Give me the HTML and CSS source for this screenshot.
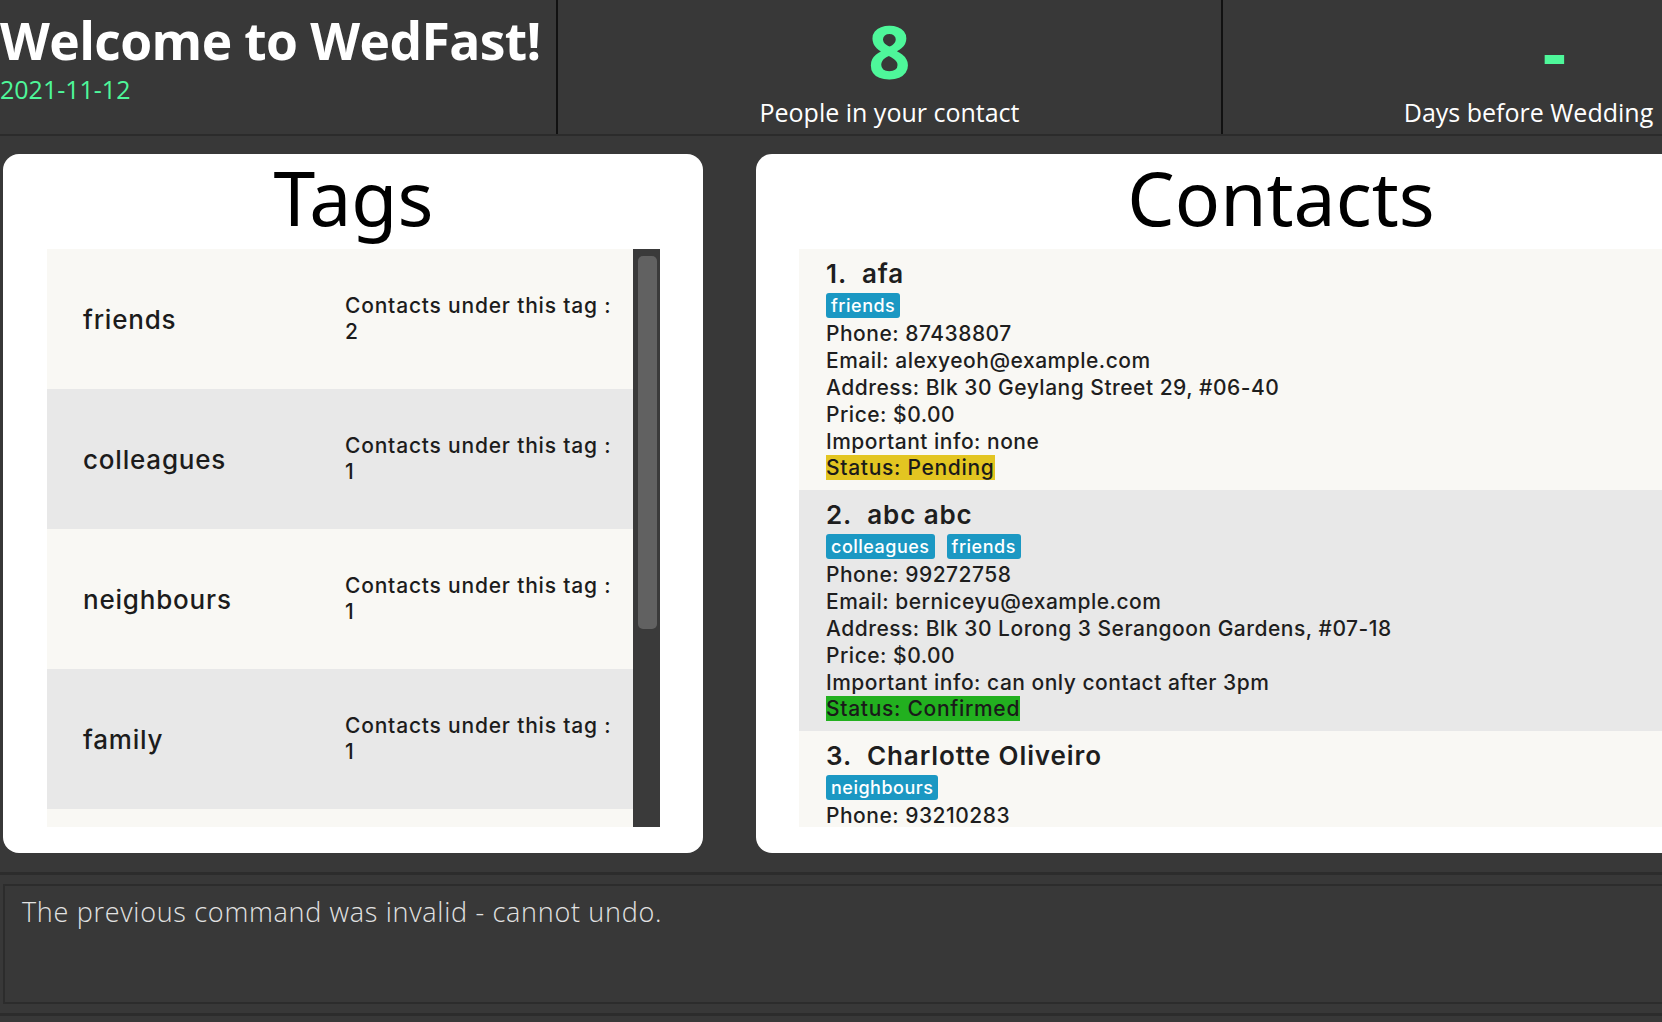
FILE: index.html
```html
<!DOCTYPE html>
<html lang="en">
<head>
<meta charset="utf-8">
<title>WedFast</title>
<link rel="stylesheet" href="styles.css">
</head>
<body>
<div class="app">
  <header class="header">
    <div class="welcome">
      <div class="welcome-title">Welcome to WedFast!</div>
      <div class="welcome-date">2021-11-12</div>
    </div>
    <div class="stat">
      <div class="stat-num">8</div>
      <div class="stat-label">People in your contact</div>
    </div>
    <div class="stat stat-right">
      <div class="stat-num">-</div>
      <div class="stat-label">Days before Wedding</div>
    </div>
  </header>

  <main class="main">
    <section class="panel tags-panel">
      <h2 class="panel-title">Tags</h2>
      <div class="tag-list">
        <div class="tag-rows">
          <div class="tag-row odd"><div class="tag-name">friends</div><div class="tag-count">Contacts under this tag :<br>2</div></div>
          <div class="tag-row even"><div class="tag-name">colleagues</div><div class="tag-count">Contacts under this tag :<br>1</div></div>
          <div class="tag-row odd"><div class="tag-name">neighbours</div><div class="tag-count">Contacts under this tag :<br>1</div></div>
          <div class="tag-row even"><div class="tag-name">family</div><div class="tag-count">Contacts under this tag :<br>1</div></div>
          <div class="tag-row odd"></div>
        </div>
        <div class="scrollbar"><div class="thumb"></div></div>
      </div>
    </section>

    <section class="panel contacts-panel">
      <h2 class="panel-title">Contacts</h2>
      <div class="contact-list">
        <div class="card odd">
          <div class="card-name">1.&nbsp; afa</div>
          <div class="chips"><span class="chip">friends</span></div>
          <div class="line">Phone: 87438807</div>
          <div class="line">Email: alexyeoh@example.com</div>
          <div class="line">Address: Blk 30 Geylang Street 29, #06-40</div>
          <div class="line">Price: $0.00</div>
          <div class="line">Important info: none</div>
          <div class="status-line"><span class="status pending">Status: Pending</span></div>
        </div>
        <div class="card even">
          <div class="card-name">2.&nbsp; abc abc</div>
          <div class="chips"><span class="chip">colleagues</span><span class="chip">friends</span></div>
          <div class="line">Phone: 99272758</div>
          <div class="line">Email: berniceyu@example.com</div>
          <div class="line">Address: Blk 30 Lorong 3 Serangoon Gardens, #07-18</div>
          <div class="line">Price: $0.00</div>
          <div class="line">Important info: can only contact after 3pm</div>
          <div class="status-line"><span class="status confirmed">Status: Confirmed</span></div>
        </div>
        <div class="card odd card-last">
          <div class="card-name">3.&nbsp; Charlotte Oliveiro</div>
          <div class="chips"><span class="chip">neighbours</span></div>
          <div class="line">Phone: 93210283</div>
        </div>
      </div>
    </section>
  </main>

  <div class="separator"></div>
  <div class="result-wrap">
    <div class="result-box">The previous command was invalid - cannot undo.</div>
  </div>
  <div class="bottom-bar"></div>
</div>
</body>
</html>
```

FILE: styles.css
```css
* { box-sizing: border-box; }

html, body {
  margin: 0;
  padding: 0;
  background: #383838;
  overflow: hidden;
}

.app {
  width: 1662px;
  height: 1022px;
  overflow: hidden;
  background: #383838;
}

/* Header */
.header {
  display: grid;
  grid-template-columns: 556px 665px 665px;
  height: 136px;
  border-bottom: 2px solid #2b2b2b;
  width: 1886px;
}

.welcome {
  display: flex;
  flex-direction: column;
  padding-top: 10px;
}

.welcome-title {
  font-family: "Open Sans", "Noto Sans", sans-serif;
  font-weight: 700;
  font-size: 51.6px;
  line-height: 60px;
  color: #ffffff;
  letter-spacing: -0.6px;
  white-space: nowrap;
}

.welcome-date {
  margin-top: 4px;
  font-family: "Open Sans", "Noto Sans", sans-serif;
  font-size: 25px;
  line-height: 30px;
  color: #4ef79a;
}

.stat {
  display: flex;
  flex-direction: column;
  align-items: center;
  border-left: 2px solid #111111;
  padding-top: 12px;
}

.stat-num {
  font-family: "Open Sans", "Noto Sans", sans-serif;
  font-weight: 700;
  font-size: 74px;
  line-height: 78px;
  color: #4ef79a;
}

.stat-label {
  margin-top: 6px;
  font-family: "Open Sans", "Noto Sans", sans-serif;
  font-size: 25px;
  line-height: 32px;
  color: #ffffff;
}

.stat-right .stat-label {
  margin-right: 52px;
}

/* Main panels */
.main {
  display: flex;
  gap: 53px;
  padding-top: 18px;
  padding-left: 3px;
  height: 717px;
}

.panel {
  background: #ffffff;
  border-radius: 16px;
  height: 699px;
  flex-shrink: 0;
  display: flex;
  flex-direction: column;
}

.tags-panel {
  width: 700px;
  padding: 0 43px 26px 44px;
}

.contacts-panel {
  width: 1050px;
  padding: 0 0 26px 43px;
}

.panel-title {
  margin: 0;
  height: 95px;
  padding-top: 6px;
  font-family: "Noto Sans", "Open Sans", sans-serif;
  font-weight: 400;
  font-size: 75px;
  line-height: 75px;
  text-align: center;
  color: #000000;
}

.contacts-panel .panel-title {
  padding-right: 43px;
}

/* Tag list */
.tag-list {
  flex: 1;
  display: flex;
  overflow: hidden;
}

.tag-rows {
  flex: 1;
  overflow: hidden;
}

.tag-row {
  height: 140px;
  display: flex;
  align-items: center;
  padding-left: 36px;
  font-family: "Inter", "Lato", sans-serif;
  color: #1c1c1c;
}

.odd { background: #f9f8f4; }
.even { background: #e8e8e8; }

.tag-name {
  width: 262px;
  font-size: 26px;
  font-weight: 500;
  letter-spacing: 0.8px;
}

.tag-count {
  font-size: 21px;
  font-weight: 500;
  line-height: 26px;
  letter-spacing: 0.8px;
}

.scrollbar {
  width: 27px;
  background: #3a3a3a;
  padding: 7px 3px 0 5px;
}

.thumb {
  height: 373px;
  background: #616161;
  border-radius: 5px;
}

/* Contacts */
.contact-list {
  flex: 1;
  overflow: hidden;
}

.card {
  padding: 10px 27px 10px 27px;
  font-family: "Inter", "Lato", sans-serif;
  color: #1e1e1e;
}

.card-last {
  padding-bottom: 0;
  height: 100px;
}

.card-name {
  font-size: 26px;
  font-weight: 600;
  line-height: 30px;
  letter-spacing: 0.9px;
}

.chips {
  display: flex;
  gap: 12px;
  margin-top: 4px;
  margin-bottom: 2px;
}

.chip {
  display: inline-block;
  background: #1b98c3;
  color: #ffffff;
  font-size: 18px;
  font-weight: 500;
  line-height: 25px;
  height: 25px;
  padding: 0 5px;
  border-radius: 3px;
  letter-spacing: 0.5px;
}

.line {
  font-size: 21px;
  font-weight: 500;
  line-height: 27px;
  white-space: nowrap;
  letter-spacing: 0.5px;
}

.status-line {
  line-height: 25px;
  height: 25px;
}

.status {
  display: inline-block;
  font-size: 21px;
  font-weight: 500;
  line-height: 25px;
  letter-spacing: 0.7px;
  color: #1a1a1a;
}

.pending { background: #e3c521; }
.confirmed { background: #22b01f; }

/* Bottom */
.separator {
  height: 22px;
  border-bottom: 3px solid #2c2c2c;
}

.result-wrap {
  padding: 9px 0 9px 3px;
}

.result-box {
  width: 1700px;
  height: 120px;
  border: 2px solid #2c2c2c;
  padding: 10px 17px;
  font-family: "Open Sans", "Noto Sans", sans-serif;
  font-weight: 300;
  font-size: 27px;
  line-height: 32px;
  letter-spacing: 0.7px;
  color: #e2e2e2;
}

.bottom-bar {
  height: 9px;
  border-top: 3px solid #2c2c2c;
}
```
